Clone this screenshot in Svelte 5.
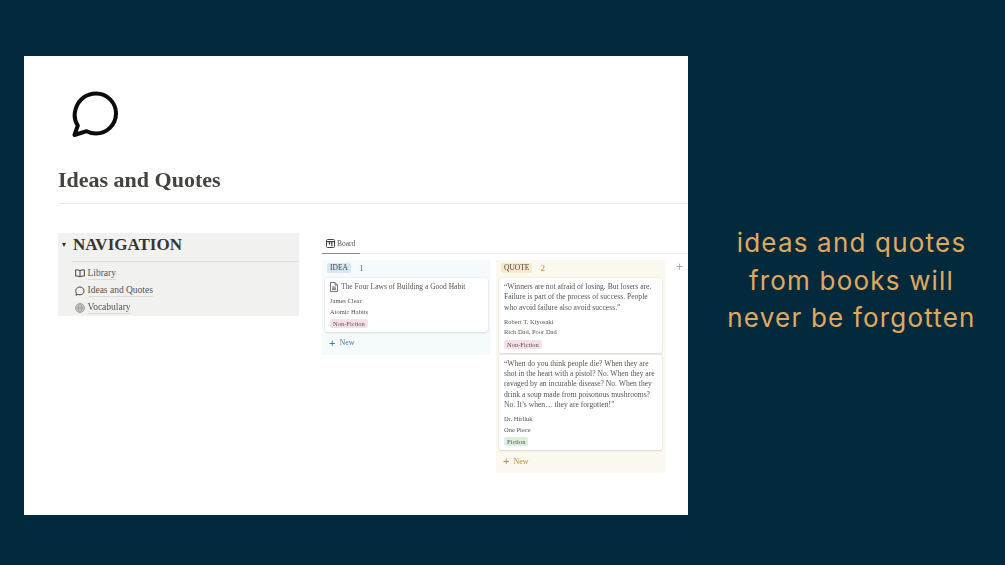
<script>
  const nav = [
    { label: 'Library', icon: 'book' },
    { label: 'Ideas and Quotes', icon: 'bubble' },
    { label: 'Vocabulary', icon: 'globe' }
  ];

  const quotes = [
    {
      lines: ['“Winners are not afraid of losing. But losers are.', 'Failure is part of the process of success. People', 'who avoid failure also avoid success.”'],
      author: 'Robert T. Kiyosaki',
      book: 'Rich Dad, Poor Dad',
      tag: 'Non-Fiction',
      tagClass: 'pink'
    },
    {
      lines: ['“When do you think people die? When they are', 'shot in the heart with a pistol? No. When they are', 'ravaged by an incurable disease? No. When they', 'drink a soup made from poisonous mushrooms?', 'No. It’s when… they are forgotten!”'],
      author: 'Dr. Hiriluk',
      book: 'One Piece',
      tag: 'Fiction',
      tagClass: 'green'
    }
  ];
</script>

<div class="page">
  <main class="panel">
    <svg class="page-icon" width="50" height="50" viewBox="0 0 50 50" fill="none">
      <path d="M3.500 47 L6.800 37.500 C3.400 32.500 3 26 4.800 20.500 C7.600 11.500 15.500 5.500 25 5.500 C36 5.500 45 14.500 45 25.500 C45 36.500 36 45.500 25 45.500 C21.500 45.500 18.500 44.600 15.600 43.200 Z" stroke="#0b0b0b" stroke-width="4" stroke-linejoin="round"/>
    </svg>
    <h1>Ideas and Quotes</h1>
    <div class="rule"></div>

    <div class="columns">
      <section class="nav">
        <div class="nav-head">
          <span class="caret"></span>
          <h2>NAVIGATION</h2>
        </div>
        <ul>
          {#each nav as item}
            <li>
              {#if item.icon === 'book'}
                <svg width="10" height="9" viewBox="0 0 10 9" fill="none" stroke="#444" stroke-width="1">
                  <path d="M5 1.600C4 .9 2 .8.6.9v6.200c1.400-.1 3.400 0 4.400.8 1-.8 3-.9 4.400-.8V.9C8 .8 6 .9 5 1.600zM5 1.600v6.200"/>
                </svg>
              {:else if item.icon === 'bubble'}
                <svg width="10" height="10" viewBox="0 0 10 10" fill="none" stroke="#444" stroke-width="1">
                  <path d="M1 9.200l.4-2C.6 6 .6 4.600 1 3.600 1.700 2 3.200 1 5 1c2.200 0 4 1.700 4 3.900S7.200 8.800 5 8.800c-.8 0-1.400-.2-2-.4z" stroke-linejoin="round"/>
                </svg>
              {:else}
                <svg width="10" height="10" viewBox="0 0 10 10" fill="#c3c6c3" stroke="#8d918e" stroke-width=".6">
                  <circle cx="5" cy="5" r="4.500"/>
                  <path d="M.5 5h9M5 .5c-2.500 2.500-2.500 6.500 0 9M5 .5c2.500 2.500 2.500 6.500 0 9" fill="none"/>
                </svg>
              {/if}
              <span class="link">{item.label}</span>
            </li>
          {/each}
        </ul>
      </section>

      <section class="db">
        <div class="tabs">
          <div class="tab">
            <svg width="9" height="9" viewBox="0 0 9 9" fill="none" stroke="#444" stroke-width="1">
              <rect x=".5" y=".5" width="8" height="8" rx="1"/>
              <path d="M.5 2.700h8M3.500 2.700v3M5.800 2.700v4.500" stroke-width="1.200"/>
            </svg>
            Board
          </div>
        </div>

        <div class="board">
          <div class="lane blue">
            <div class="lane-head">
              <span class="chip">IDEA</span>
              <span class="count">1</span>
            </div>
            <article class="card">
              <div class="card-title">
                <svg width="8" height="10" viewBox="0 0 8 10" fill="none" stroke="#555" stroke-width=".8">
                  <path d="M.5.500h4.500l2.500 2.500v6.500h-7zM5 .5v2.500h2.500M2 5h4M2 6.300h4M2 7.600h4"/>
                </svg>
                The Four Laws of Building a Good Habit
              </div>
              <p class="meta first">James Clear</p>
              <p class="meta">Atomic Habits</p>
              <span class="tag pink">Non-Fiction</span>
            </article>
            <div class="new"><span class="plus">+</span> New</div>
          </div>

          <div class="lane yellow">
            <div class="lane-head">
              <span class="chip">QUOTE</span>
              <span class="count">2</span>
            </div>
            {#each quotes as q}
              <article class="card">
                <div class="quote">
                  {#each q.lines as line}
                    <div>{line}</div>
                  {/each}
                </div>
                <p class="meta first">{q.author}</p>
                <p class="meta">{q.book}</p>
                <span class="tag {q.tagClass}">{q.tag}</span>
              </article>
            {/each}
            <div class="new"><span class="plus">+</span> New</div>
          </div>

          <div class="add">+</div>
        </div>
      </section>
    </div>
  </main>

  <aside class="caption">
    <div>ideas and quotes</div>
    <div>from books will</div>
    <div>never be forgotten</div>
  </aside>
</div>

<style>
  :global(body) {
    margin: 0;
    background: #03293d;
  }

  .page {
    width: 1005px;
    height: 565px;
    box-sizing: border-box;
    padding: 56px 0 50px 24px;
    display: flex;
    font-family: "Liberation Serif", serif;
    color: #37352f;
    overflow: hidden;
  }

  .panel {
    width: 664px;
    flex: none;
    background: #fff;
    box-sizing: border-box;
    padding: 32px 0 0 34px;
    overflow: hidden;
  }

  .page-icon {
    display: block;
    margin-left: 13px;
    filter: blur(.3px);
  }

  h1 {
    margin: 28px 0 0;
    font-size: 22px;
    line-height: 28px;
    font-weight: 700;
    color: #44433d;
    filter: blur(.3px);
  }

  .rule {
    height: 1px;
    background: #e9e9e7;
    margin-top: 9px;
  }

  .columns {
    display: flex;
    margin-top: 29px;
    gap: 23px;
    filter: blur(.35px);
  }

  .nav {
    width: 241px;
    height: 83px;
    flex: none;
    background: #f1f1ef;
  }

  .nav-head {
    display: flex;
    align-items: center;
    box-sizing: border-box;
    height: 28px;
    padding: 0 0 4px 4px;
    gap: 7px;
  }

  .caret {
    width: 0;
    height: 0;
    border-left: 2.500px solid transparent;
    border-right: 2.500px solid transparent;
    border-top: 4px solid #37352f;
  }

  h2 {
    margin: 0;
    font-size: 17px;
    line-height: 22px;
    font-weight: 700;
    color: #37352f;
  }

  .nav ul {
    list-style: none;
    margin: 0 0 0 14px;
    padding: 3px 0 0 3px;
    border-top: 1px solid #dcdcd9;
  }

  .nav li {
    display: flex;
    align-items: center;
    gap: 2.500px;
    height: 17px;
    font-size: 9.500px;
    color: #55544e;
  }

  .link {
    border-bottom: 1px solid #dddcd9;
    line-height: 12px;
  }

  .db {
    flex: 1;
    min-width: 0;
  }

  .tabs {
    height: 20px;
    border-bottom: 1px solid #eeeeec;
  }

  .tab {
    display: inline-flex;
    align-items: center;
    gap: 2px;
    box-sizing: border-box;
    height: 21px;
    width: 38px;
    padding-left: 4px;
    border-bottom: 1px solid #8b8a86;
    font-size: 7.500px;
    color: #55544e;
    white-space: nowrap;
  }

  .board {
    display: flex;
    align-items: flex-start;
    gap: 5px;
    margin-top: 6px;
  }

  .lane {
    width: 169px;
    flex: none;
    box-sizing: border-box;
    padding: 3px 3px 4px;
    border-radius: 2px;
  }

  .lane.blue { background: #f5fafd; color: #3d7fa8; }
  .lane.yellow { background: #fbf8f0; color: #c98a2e; }

  .lane-head {
    display: flex;
    align-items: center;
    height: 10px;
    gap: 8px;
    padding-left: 2px;
    margin-bottom: 5px;
    font-size: 9px;
  }

  .chip {
    padding: 0 3px;
    border-radius: 2px;
    font-size: 7.500px;
    line-height: 10px;
    color: #44433d;
  }

  .blue .chip { background: #d6e8f3; }
  .yellow .chip { background: #fbe9cd; }

  .card {
    background: #fff;
    border-radius: 2px;
    box-shadow: 0 0 0 .5px rgba(15,15,15,.06), 0 1px 2px rgba(15,15,15,.1);
    padding: 4px 5px 4px;
    margin-bottom: 2px;
    color: #55544e;
  }

  .card-title {
    display: flex;
    align-items: center;
    gap: 3px;
    font-size: 7.500px;
    line-height: 10px;
    white-space: nowrap;
  }

  .quote {
    font-size: 7.600px;
    line-height: 10.300px;
    white-space: nowrap;
  }

  .meta {
    margin: 0;
    font-size: 6.500px;
    line-height: 10.500px;
    white-space: nowrap;
  }

  .meta.first {
    margin-top: 4px;
  }

  .tag {
    display: block;
    width: fit-content;
    margin-top: 2px;
    padding: 0 3px;
    border-radius: 2px;
    font-size: 6.500px;
    line-height: 9px;
  }

  .tag.pink { background: #f7dfe8; }
  .tag.green { background: #dcefdf; }

  .new {
    display: flex;
    align-items: center;
    gap: 4px;
    height: 15.500px;
    margin-top: 3px;
    padding-left: 4px;
    font-size: 8px;
  }

  .plus {
    font-family: "Liberation Sans", sans-serif;
    font-size: 11px;
    line-height: 10px;
  }

  .add {
    margin-left: 6px;
    font-family: "Liberation Sans", sans-serif;
    font-size: 12px;
    line-height: 14px;
    color: #a8a7a3;
  }

  .caption {
    flex: 1;
    padding-top: 168px;
    padding-left: 10px;
    text-align: center;
    font-family: Inter, sans-serif;
    font-weight: 400;
    font-size: 26px;
    letter-spacing: 1.200px;
    line-height: 37.500px;
    color: #e0aa5e;
    white-space: nowrap;
  }
</style>
